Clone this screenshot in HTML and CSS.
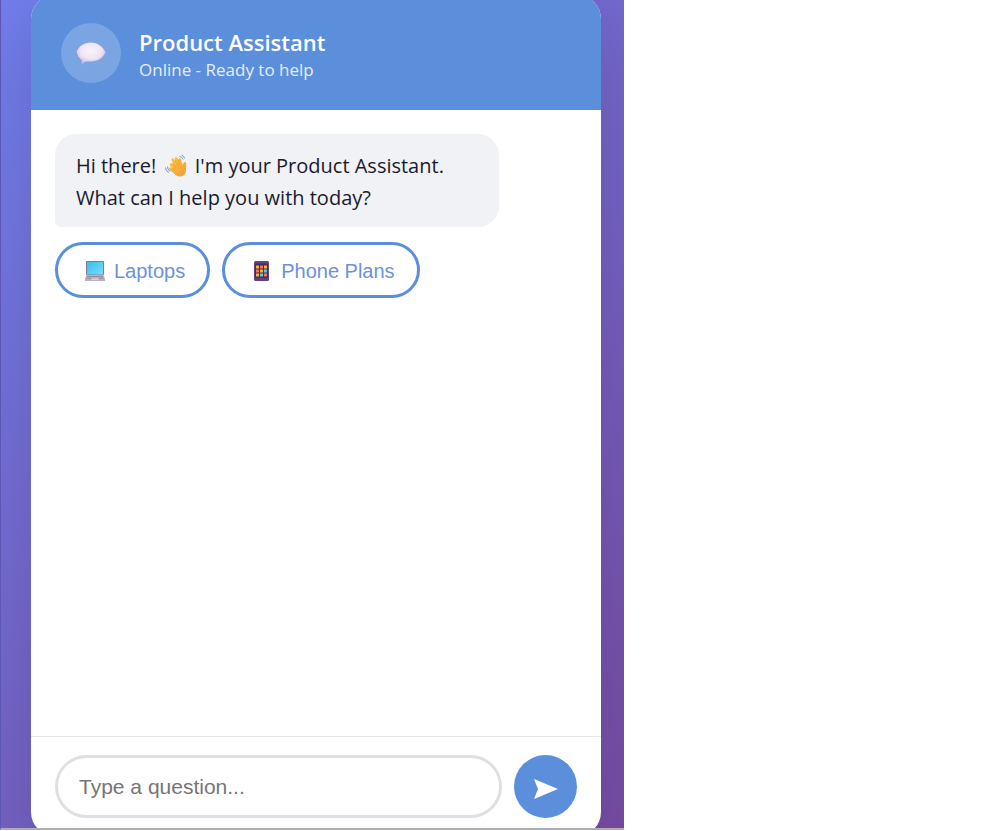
FILE: index.html
```html
<!DOCTYPE html>
<html lang="en">
<head>
<meta charset="utf-8">
<meta name="viewport" content="width=device-width, initial-scale=1">
<title>Product Assistant</title>
<link rel="stylesheet" href="styles.css">
</head>
<body>
<div class="stage">
  <main class="chat">
    <header class="chat-header">
      <div class="avatar">
        <svg width="30" height="24" viewBox="0 0 30 24" aria-hidden="true">
          <defs>
            <radialGradient id="bubble" cx="50%" cy="38%" r="62%">
              <stop offset="0" stop-color="#f8f4fb"/>
              <stop offset=".6" stop-color="#eee4f3"/>
              <stop offset="1" stop-color="#cfb0dc"/>
            </radialGradient>
          </defs>
          <path d="M15 1.500C22 1.500 27 6 29.500 11C27 17 22 20.500 15 20.500C12 20.500 10 20.500 8.500 21L6 23.500L5.500 19C3 17 1.500 14 .5 11C3 5 8 1.500 15 1.500Z" fill="url(#bubble)"/>
        </svg>
      </div>
      <div>
        <h1 class="title">Product Assistant</h1>
        <p class="status">Online - Ready to help</p>
      </div>
    </header>
    <section class="messages">
      <p class="message">Hi there! <svg class="wave" width="24" height="24" viewBox="0 0 24 24" role="img" aria-label="waving hand">
          <defs>
            <linearGradient id="skin" x1="0" y1="0" x2="1" y2="1">
              <stop offset="0" stop-color="#ffc83d"/>
              <stop offset="1" stop-color="#f29b38"/>
            </linearGradient>
          </defs>
          <path d="M6.500 9.500C7.500 8.500 8.500 9 9.200 9.700L7.500 6.300C7 4.500 9 3.600 10 5L11 6.500L10.800 4.500C11 2.800 13 3 13.500 4.300L14.300 6L14.500 5C15.300 3.800 16.800 4.300 17.200 5.800L18.700 11L19.500 9C20.200 7.300 22.300 7.800 22.300 9.600L22 16C22 20 19.500 22.500 16 22.500C13.500 22.500 12 21.500 10.500 20L5.500 15.500C4.300 14 5.700 12.800 7 13.400L8.300 14.200L6.500 12C5.500 10.800 5.800 10.200 6.500 9.500Z" fill="url(#skin)"/>
          <path d="M9.200 9.700L12.200 14M11 6.500L14.300 12M14.300 6L16.300 11.500M8.300 14.200L10.500 16.500" stroke="#e39a2c" stroke-width=".6" fill="none"/>
          <path d="M15.500 2.500Q18 2.500 19 5.500M17.500 1Q20 1.500 20.500 4.500M3.500 12.500Q3.200 16 6.500 17.200M1.500 13.500Q1.500 17.500 5 18.500" stroke="#6fa0c6" stroke-width="1" fill="none"/>
        </svg> I'm your Product Assistant.<br>What can I help you with today?</p>
      <div class="options">
        <button class="option" type="button">
          <svg width="20" height="22" viewBox="0 0 20 22" aria-hidden="true">
            <defs>
              <linearGradient id="screen" x1="0" y1="0" x2="1" y2="1">
                <stop offset="0" stop-color="#35bfe9"/>
                <stop offset="1" stop-color="#79dcff"/>
              </linearGradient>
            </defs>
            <rect x="1" y="1" width="18" height="14" rx="1" fill="#8a7595"/>
            <rect x="2" y="2" width="16" height="12.500" fill="url(#screen)"/>
            <path d="M1.500 15H18.500L20 19V21H0V19Z" fill="#b9b3c1"/>
            <path d="M2 16.500H18M1.500 18.300H6M14 18.300H18.500" stroke="#8d8498" stroke-width=".8"/>
            <path d="M7 18.500H13L13.500 20H6.500Z" fill="#d6d1da"/>
          </svg>
          Laptops
        </button>
        <button class="option" type="button">
          <svg width="20" height="22" viewBox="1 0 20 22" aria-hidden="true">
            <rect x="3" y="1" width="15" height="20" rx="1.500" fill="#634080"/>
            <rect x="4" y="3.500" width="13" height="14.500" fill="#432c66"/>
            <g fill="#ffb02e"><rect x="5" y="5.500" width="3" height="3"/><rect x="13" y="5.500" width="3" height="3"/><rect x="9" y="9.500" width="3" height="3"/><rect x="5" y="13.500" width="3" height="3"/></g>
            <g fill="#f9754d"><rect x="9" y="5.500" width="3" height="3"/><rect x="5" y="9.500" width="3" height="3"/><rect x="13" y="13.500" width="3" height="3"/></g>
            <g fill="#5ec5e5"><rect x="13" y="9.500" width="3" height="3"/><rect x="9" y="13.500" width="3" height="3"/></g>
          </svg>
          Phone Plans
        </button>
      </div>
    </section>
    <form class="composer">
      <input class="question" type="text" placeholder="Type a question..." aria-label="Type a question">
      <button class="send" type="button" aria-label="Send">
        <svg width="24" height="20" viewBox="0 0 24 20" aria-hidden="true"><path d="M0 0L24 10L0 20L4 10Z" fill="#fff"/></svg>
      </button>
    </form>
  </main>
</div>
</body>
</html>
```
FILE: styles.css
```css
* { box-sizing: border-box; }

body {
  margin: 0;
  background: #fff;
  font-family: "Segoe UI", "Open Sans", "Noto Sans", sans-serif;
}

.stage {
  display: flex;
  width: 62.4%;
  height: calc(100vh - 1px);
  padding: 0 23px 0 30px;
  border-left: 1px solid #5d57b4;
  border-bottom: 2px solid #b0adb9;
  overflow: hidden;
  background: linear-gradient(135deg, #707deb 0%, #764ba2 100%);
}

.chat {
  display: flex;
  flex: 1;
  flex-direction: column;
  min-width: 0;
  margin: -5px 0 -8px;
  border-radius: 24px;
  overflow: hidden;
  background: #fff;
  box-shadow: 0 20px 60px rgba(0, 0, 0, .12);
}

.chat-header {
  display: flex;
  align-items: center;
  gap: 18px;
  padding: 28px 30px 27px;
  background: #5b8edb;
  color: #fff;
}

.avatar {
  display: flex;
  align-items: center;
  justify-content: center;
  width: 60px;
  height: 60px;
  border-radius: 50%;
  background: rgba(255, 255, 255, .2);
}

.title {
  margin: 0;
  padding-top: 3px;
  font-size: 22px;
  font-weight: 600;
  line-height: 30px;
}

.status {
  margin: 0;
  font-size: 17px;
  line-height: 25px;
  opacity: .85;
}

.messages {
  display: flex;
  flex: 1;
  flex-direction: column;
  align-items: flex-start;
  gap: 15px;
  padding: 24px;
}

.message {
  width: 85%;
  margin: 0;
  padding: 16px 21px 13px;
  border-radius: 21px 21px 21px 6px;
  background: #f0f2f6;
  color: #1a1a2e;
  font-size: 20px;
  line-height: 32px;
}

.wave {
  margin: 0 2px;
  vertical-align: -5px;
}

.options {
  display: flex;
  flex-wrap: wrap;
  gap: 12px;
}

.option {
  display: flex;
  align-items: center;
  gap: 9px;
  height: 56px;
  padding: 2px 22px 0 27px;
  border: 3px solid #5b8edb;
  border-radius: 28px;
  background: #fff;
  color: #6d91dc;
  font-family: Arial, "Liberation Sans", sans-serif;
  font-size: 20px;
}

.composer {
  display: flex;
  gap: 12px;
  padding: 18px 24px;
  border-top: 1px solid #e6e6e8;
}

.question {
  flex: 1;
  min-width: 0;
  height: 63px;
  padding: 0 21px;
  border: 3px solid #e0e0e0;
  border-radius: 32px;
  background: #fff;
  color: #1a1a2e;
  font-family: Arial, "Liberation Sans", sans-serif;
  font-size: 21px;
}

.question::placeholder { color: #757575; }

.send {
  display: flex;
  align-items: center;
  justify-content: center;
  width: 63px;
  height: 63px;
  padding: 4px 0 0;
  border: 0;
  border-radius: 50%;
  background: #5b8edb;
}
```
